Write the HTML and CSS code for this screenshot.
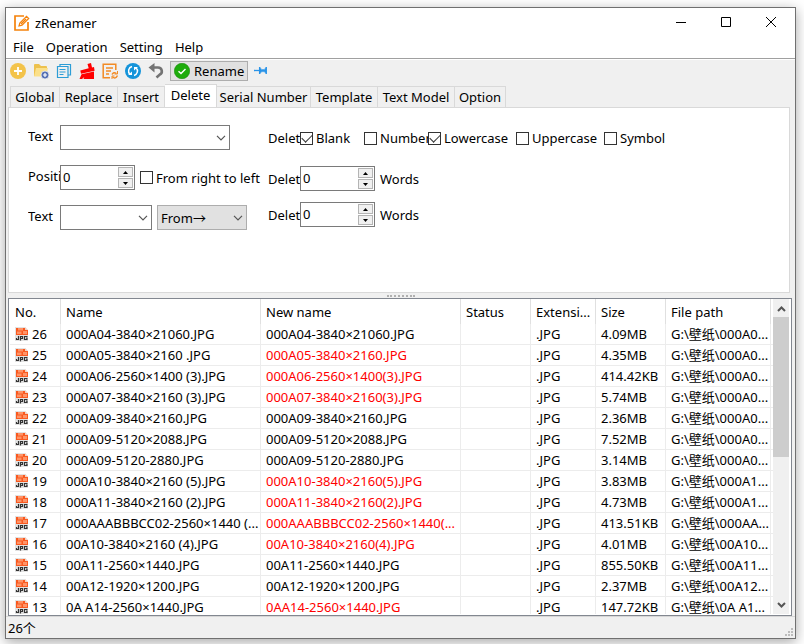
FILE: index.html
```html
<!DOCTYPE html>
<html lang="en">
<head>
<meta charset="utf-8">
<title>zRenamer</title>
<link rel="stylesheet" href="styles.css">
</head>
<body>
<svg class="sprite" aria-hidden="true">
  <symbol id="chevron" viewBox="0 0 10 6"><path d="M1 .8 5 4.8 9 .8" fill="none" stroke="#555" stroke-width="1.2"/></symbol>
  <symbol id="spin-up" viewBox="0 0 5 3"><path d="M0 3 2.5 0 5 3z"/></symbol>
  <symbol id="spin-down" viewBox="0 0 5 3"><path d="M0 0h5L2.5 3z"/></symbol>
  <symbol id="jpg" viewBox="0 0 14 14">
    <path d="M0 0h10l3 3v11H0z" fill="#e2e2e2"/>
    <path d="M1 1h9v2h3v5H1z" fill="#f9591f"/>
    <path d="M3 1h5v2.500H3zM8 4h4v3H8zM2 4.500h4.500V7H2z" fill="#ff9468"/>
    <path d="M10 0 13 3h-3z" fill="#f4d0c0"/>
    <path d="M1.500 11v1.500h2V9M5.500 13.500V9.500h2v2h-2M12.500 9.500h-3v3h2.500v-1.500h-1" fill="none" stroke="#333" stroke-width="1.200"/>
  </symbol>
</svg>
<main class="window">
  <header class="titlebar">
    <svg class="app-icon" viewBox="0 0 16 16" fill="none" stroke="#f5820b" aria-hidden="true">
      <path d="M10 1H1v14h13V7" stroke-width="1.700"/>
      <path d="M5 11 5.800 8 12.500 1.300 14.700 3.500 8 10.200zM7 9l5-5" stroke-width="1.200"/>
    </svg>
    <h1>zRenamer</h1>
    <div class="window-buttons">
      <button aria-label="Minimize"><svg viewBox="0 0 12 12"><path d="M1 5.500h10"/></svg></button>
      <button aria-label="Maximize"><svg viewBox="0 0 12 12"><path d="M1.500 .5h9v9h-9z"/></svg></button>
      <button aria-label="Close"><svg viewBox="0 0 12 12"><path d="M1 0l10 10M11 0 1 10"/></svg></button>
    </div>
  </header>
  <nav class="menubar">
    <button>File</button><button>Operation</button><button>Setting</button><button>Help</button>
  </nav>
  <div class="toolbar">
    <div class="tools">
      <button aria-label="Add files"><svg viewBox="0 0 16 16"><circle cx="8" cy="8" r="8" fill="#f3c34a"/><path d="M8 4v8M4 8h8" stroke="#fff" stroke-width="1.800"/></svg></button>
      <button aria-label="Add folder"><svg viewBox="0 0 16 16"><path d="M1 2q0-1 1-1h4l2 2h5q1 0 1 1v9H1z" fill="#edc14d"/><path d="M3 5h12l-2 8.500H1z" fill="#fbe08a"/><circle cx="12" cy="12" r="4" fill="#5470b5" stroke="#f0f0f0" stroke-width=".8"/><path d="M12 10v4M10 12h4" stroke="#fff" stroke-width="1.200"/></svg></button>
      <button aria-label="Copy"><svg viewBox="0 0 16 16" fill="none" stroke="#2c9dd6"><path d="M4 3V1.500h10.500v10.500H12M1.500 3.500h10.500v11h-10.500z" stroke-width="1.200"/><path d="M3.500 6.500h6M3.500 9h6M3.500 11.500h4"/></svg></button>
      <button aria-label="Clear"><svg viewBox="0 0 16 16" fill="#f00"><path d="M8.500 1 12 0 13 4.500 15 4 15.600 7.800 2 10.800 1.300 7.500 9.700 5.300z"/><path d="M2.500 11.300 15 8.600V16H4.500l.8-2L3 16H.5z"/></svg></button>
      <button aria-label="Edit list"><svg viewBox="0 0 16 16" fill="none" stroke="#f28a24" stroke-width="1.500"><path d="M8 14.800H1.200V1.200h12.600V7"/><path d="M4 5h7M4 8h5M4 11h3"/><path d="M10 11.500q1.500-3 4.500-1M15.500 12.500q-2 4-5 1.500" stroke-width="1.400"/><path d="M15.500 8v3h-3M10 16v-3h2.500" stroke-width="1"/></svg></button>
      <button aria-label="Refresh"><svg viewBox="0 0 16 16"><circle cx="8" cy="8" r="8" fill="#1594da"/><path d="M7 3.600A4.500 4.500 0 0 0 5 11.300M9 12.400A4.500 4.500 0 0 0 11 4.700" fill="none" stroke="#fff" stroke-width="1.500"/><path d="M3 12h4V8.500zM13 4H9v3.500z" fill="#fff"/></svg></button>
      <button aria-label="Undo"><svg viewBox="0 0 16 16"><path d="M4 4.500h6a3.800 3.800 0 0 1 1.500 7.300L8.500 14.500" fill="none" stroke="#737373" stroke-width="2.600"/><path d="M.5 4.500 6.500 0v9.500z" fill="#737373"/></svg></button>
    </div>
    <button class="rename"><svg viewBox="0 0 16 16"><circle cx="8" cy="8" r="7.700" fill="#1eac0c" stroke="#178c08" stroke-width=".6"/><path d="M4.500 8.200 7 10.600 11.500 6" fill="none" stroke="#fff" stroke-width="1.400"/></svg><span>Rename</span></button>
    <button aria-label="Pin"><svg viewBox="0 0 16 16" fill="none" stroke="#2993e8"><path d="M0 7.500h5" stroke-width="1.300"/><path d="M5.700 4v7M12.200 4v7" stroke-width="1.500"/><path d="M6 5.500Q9 8 12 5.500V9.500Q9 7.500 6 9.500z" fill="#2993e8" stroke-width=".6"/></svg></button>
  </div>
  <div class="tabs" role="tablist">
    <button role="tab">Global</button><button role="tab">Replace</button><button role="tab">Insert</button><button role="tab" class="active" aria-selected="true">Delete</button><button role="tab">Serial Number</button><button role="tab">Template</button><button role="tab">Text Model</button><button role="tab">Option</button>
  </div>
  <form class="panel">
    <div class="group">
      <div class="row">
        <label class="caption" for="text">Text</label>
        <span class="select wide"><select id="text"><option></option></select><svg><use href="#chevron"/></svg></span>
      </div>
      <div class="row">
        <label class="caption" for="position">Position</label>
        <span class="spinner"><input id="position" type="text" value="0"><span class="steps"><button type="button" aria-label="Increase"><svg><use href="#spin-up"/></svg></button><button type="button" aria-label="Decrease"><svg><use href="#spin-down"/></svg></button></span></span>
        <label class="check spaced"><input type="checkbox">From right to left</label>
      </div>
      <div class="row">
        <label class="caption" for="anchor">Text</label>
        <span class="select medium"><select id="anchor"><option></option></select><svg><use href="#chevron"/></svg></span>
        <span class="select gray"><select aria-label="Direction"><option>From→</option></select><svg><use href="#chevron"/></svg></span>
      </div>
    </div>
    <div class="group">
      <div class="row">
        <span class="caption">Delete</span>
        <div class="checks">
          <label class="check"><input type="checkbox" checked>Blank</label>
          <label class="check"><input type="checkbox">Number</label>
          <label class="check"><input type="checkbox" checked>Lowercase</label>
          <label class="check"><input type="checkbox">Uppercase</label>
          <label class="check"><input type="checkbox">Symbol</label>
        </div>
      </div>
      <div class="row">
        <label class="caption" for="words-a">Delete</label>
        <span class="spinner"><input id="words-a" type="text" value="0"><span class="steps"><button type="button" aria-label="Increase"><svg><use href="#spin-up"/></svg></button><button type="button" aria-label="Decrease"><svg><use href="#spin-down"/></svg></button></span></span>
        <span class="spaced">Words</span>
      </div>
      <div class="row">
        <label class="caption" for="words-b">Delete</label>
        <span class="spinner"><input id="words-b" type="text" value="0"><span class="steps"><button type="button" aria-label="Increase"><svg><use href="#spin-up"/></svg></button><button type="button" aria-label="Decrease"><svg><use href="#spin-down"/></svg></button></span></span>
        <span class="spaced">Words</span>
      </div>
    </div>
  </form>
  <div class="splitter"><span></span></div>
  <section class="list">
    <div class="viewport">
      <table>
        <colgroup><col class="c-no"><col class="c-name"><col class="c-name"><col class="c-status"><col class="c-ext"><col class="c-size"><col class="c-path"><col></colgroup>
        <thead><tr><th>No.</th><th>Name</th><th>New name</th><th>Status</th><th>Extensi...</th><th>Size</th><th>File path</th><th class="rest"></th></tr></thead>
        <tbody>
          <tr><td><svg><use href="#jpg"/></svg>26</td><td>000A04-3840×21060.JPG</td><td>000A04-3840×21060.JPG</td><td></td><td>.JPG</td><td>4.09MB</td><td>G:\壁纸\000A0...</td><td></td></tr>
          <tr><td><svg><use href="#jpg"/></svg>25</td><td>000A05-3840×2160 .JPG</td><td class="changed">000A05-3840×2160.JPG</td><td></td><td>.JPG</td><td>4.35MB</td><td>G:\壁纸\000A0...</td><td></td></tr>
          <tr><td><svg><use href="#jpg"/></svg>24</td><td>000A06-2560×1400 (3).JPG</td><td class="changed">000A06-2560×1400(3).JPG</td><td></td><td>.JPG</td><td>414.42KB</td><td>G:\壁纸\000A0...</td><td></td></tr>
          <tr><td><svg><use href="#jpg"/></svg>23</td><td>000A07-3840×2160 (3).JPG</td><td class="changed">000A07-3840×2160(3).JPG</td><td></td><td>.JPG</td><td>5.74MB</td><td>G:\壁纸\000A0...</td><td></td></tr>
          <tr><td><svg><use href="#jpg"/></svg>22</td><td>000A09-3840×2160.JPG</td><td>000A09-3840×2160.JPG</td><td></td><td>.JPG</td><td>2.36MB</td><td>G:\壁纸\000A0...</td><td></td></tr>
          <tr><td><svg><use href="#jpg"/></svg>21</td><td>000A09-5120×2088.JPG</td><td>000A09-5120×2088.JPG</td><td></td><td>.JPG</td><td>7.52MB</td><td>G:\壁纸\000A0...</td><td></td></tr>
          <tr><td><svg><use href="#jpg"/></svg>20</td><td>000A09-5120-2880.JPG</td><td>000A09-5120-2880.JPG</td><td></td><td>.JPG</td><td>3.14MB</td><td>G:\壁纸\000A0...</td><td></td></tr>
          <tr><td><svg><use href="#jpg"/></svg>19</td><td>000A10-3840×2160 (5).JPG</td><td class="changed">000A10-3840×2160(5).JPG</td><td></td><td>.JPG</td><td>3.83MB</td><td>G:\壁纸\000A1...</td><td></td></tr>
          <tr><td><svg><use href="#jpg"/></svg>18</td><td>000A11-3840×2160 (2).JPG</td><td class="changed">000A11-3840×2160(2).JPG</td><td></td><td>.JPG</td><td>4.73MB</td><td>G:\壁纸\000A1...</td><td></td></tr>
          <tr><td><svg><use href="#jpg"/></svg>17</td><td>000AAABBBCC02-2560×1440 (...</td><td class="changed">000AAABBBCC02-2560×1440(...</td><td></td><td>.JPG</td><td>413.51KB</td><td>G:\壁纸\000AA...</td><td></td></tr>
          <tr><td><svg><use href="#jpg"/></svg>16</td><td>00A10-3840×2160 (4).JPG</td><td class="changed">00A10-3840×2160(4).JPG</td><td></td><td>.JPG</td><td>4.01MB</td><td>G:\壁纸\00A10...</td><td></td></tr>
          <tr><td><svg><use href="#jpg"/></svg>15</td><td>00A11-2560×1440.JPG</td><td>00A11-2560×1440.JPG</td><td></td><td>.JPG</td><td>855.50KB</td><td>G:\壁纸\00A11...</td><td></td></tr>
          <tr><td><svg><use href="#jpg"/></svg>14</td><td>00A12-1920×1200.JPG</td><td>00A12-1920×1200.JPG</td><td></td><td>.JPG</td><td>2.37MB</td><td>G:\壁纸\00A12...</td><td></td></tr>
          <tr><td><svg><use href="#jpg"/></svg>13</td><td>0A A14-2560×1440.JPG</td><td class="changed">0AA14-2560×1440.JPG</td><td></td><td>.JPG</td><td>147.72KB</td><td>G:\壁纸\0A A1...</td><td></td></tr>
        </tbody>
      </table>
    </div>
    <div class="scrollbar">
      <button aria-label="Scroll up"><svg viewBox="0 0 9 6"><path d="M1 5 4.500 1.500 8 5"/></svg></button>
      <div class="thumb"></div>
      <button aria-label="Scroll down"><svg viewBox="0 0 9 6"><path d="M1 1 4.500 4.500 8 1"/></svg></button>
    </div>
  </section>
  <footer class="statusbar"><span>26个</span>
    <svg class="grip" viewBox="0 0 8 8" fill="#bcbcbc" aria-hidden="true"><path d="M6 0h2v2H6zM3 3h2v2H3zM6 3h2v2H6zM0 6h2v2H0zM3 6h2v2H3zM6 6h2v2H6z"/></svg>
  </footer>
</main>
</body>
</html>
```
FILE: styles.css
```css
* { box-sizing: border-box; }

body {
  margin: 0;
  padding: 7px 8px 5px 5px;
  height: 100vh;
  overflow: hidden;
  background: #fff;
  color: #000;
  font: 13px/18px "Noto Sans", "Noto Sans CJK SC", sans-serif;
}

button, input, select { font: inherit; color: inherit; margin: 0; }
button { padding: 0; border: 0; background: none; white-space: nowrap; }
.sprite { position: absolute; width: 0; height: 0; }

.window {
  display: flex;
  flex-direction: column;
  height: 100%;
  border: 1px solid #707070;
  background: #f0f0f0;
  box-shadow: 0 3px 12px rgba(0, 0, 0, 0.35);
}

/* Title bar and menu */
.titlebar {
  display: flex;
  align-items: center;
  height: 29px;
  padding-left: 8px;
  background: #fff;
}
.app-icon { width: 16px; height: 16px; }
h1 { flex: 1; margin: 0 0 0 5px; font-size: 13px; font-weight: 400; }
.window-buttons { display: flex; padding-right: 2px; }
.window-buttons button { display: grid; place-items: center; width: 45px; height: 28px; }
.window-buttons svg { width: 12px; height: 12px; fill: none; stroke: #000; }

.menubar {
  display: flex;
  gap: 12px;
  height: 22px;
  padding: 0 7px;
  background: #fff;
  border-bottom: 1px solid #a0a0a0;
}
.menubar button { height: 20px; }

/* Toolbar */
.toolbar {
  display: flex;
  align-items: center;
  gap: 6px;
  height: 25px;
  padding: 0 4px 2px;
  border-top: 1px solid #fff;
}
.tools { display: flex; gap: 7px; }
.toolbar button { display: flex; align-items: center; }
.toolbar svg { width: 16px; height: 16px; }
.toolbar .rename {
  gap: 4px;
  height: 20px;
  padding: 0 3px;
  background: #e1e1e1;
  border: 1px solid #adadad;
}

/* Tabs */
.tabs {
  display: grid;
  grid-template-columns: 50px 58px 47px 52px 94px 67px 77px 51px;
  align-items: end;
  height: 23px;
  padding-left: 4px;
}
.tabs button {
  height: 22px;
  padding-bottom: 2px;
  border: 1px solid #d9d9d9;
  border-width: 1px 1px 0 0;
}
.tabs button:first-child { border-left-width: 1px; }
.tabs .active {
  height: 24px;
  padding-bottom: 4px;
  background: #fff;
}

/* Options of the active tab */
.panel {
  display: flex;
  gap: 12px;
  height: 186px;
  margin: 0 5px 0 2px;
  padding: 17px 19px;
  background: #fff;
  border: 1px solid #d9d9d9;
}
.group { display: flex; flex-direction: column; gap: 15px; width: 228px; }
.group + .group { flex: 1; gap: 11px; }
.group + .group .row:first-child { height: 30px; padding-bottom: 4px; }
.row { display: flex; align-items: center; height: 25px; white-space: nowrap; }
.row .caption { flex: none; width: 32px; overflow: hidden; padding-bottom: 4px; }
.group + .group .caption { padding-bottom: 0; }
.row .spaced { margin-left: 5px; }

.select { display: grid; align-items: center; height: 25px; }
.select > * { grid-area: 1 / 1; }
.select select {
  width: 100%;
  height: 25px;
  padding: 0 3px;
  appearance: none;
  border: 1px solid #7a7a7a;
  border-radius: 0;
  background: #fff;
}
.select svg { justify-self: end; width: 10px; height: 6px; margin-right: 4px; pointer-events: none; }
.wide { width: 170px; }
.medium { width: 92px; }
.gray { width: 90px; margin-left: 5px; }
.gray select { background: #e1e1e1; border-color: #adadad; }

.spinner {
  display: flex;
  width: 75px;
  height: 25px;
  border: 1px solid #7a7a7a;
  background: #fff;
}
.spinner input { flex: 1; min-width: 0; padding: 0 2px 2px; border: 0; background: none; }
.steps { display: grid; gap: 1px; width: 17px; padding: 1px; }
.steps button {
  display: grid;
  place-items: center;
  height: 10px;
  background: #f0f0f0;
  border: 1px solid #b4b4b4;
}
.steps svg { width: 5px; height: 3px; }

.checks { display: grid; grid-template-columns: 64px 64px 88px 88px auto; }
.check { display: flex; align-items: center; gap: 3px; }
.check input {
  flex: none;
  display: grid;
  place-items: center;
  width: 13px;
  height: 13px;
  appearance: none;
  border: 1px solid #333;
  background: #fff;
}
.check input:checked::after {
  content: "";
  width: 9px;
  height: 5px;
  margin-bottom: 3px;
  border: solid #333;
  border-width: 0 0 1px 1px;
  transform: rotate(-45deg);
}

.splitter { display: grid; place-items: center; height: 5px; }
.splitter span { width: 28px; border-top: 2px dotted #b0b0b0; }

/* File list */
.list {
  display: flex;
  flex: 1;
  min-height: 0;
  margin: 0 3px 0 2px;
  padding: 0 2px 1px 1px;
  border: 1px solid #828790;
  background: #fff;
}
.viewport { flex: 1; min-width: 0; overflow: hidden; }
table { width: 100%; table-layout: fixed; border-collapse: separate; border-spacing: 0; }
.c-no { width: 51px; }
.c-name { width: 200px; }
.c-status { width: 70px; }
.c-ext { width: 65px; }
.c-size { width: 70px; }
.c-path { width: 105px; }
th, td {
  padding: 0 0 0 5px;
  border-right: 1px solid #ececec;
  text-align: left;
  font-weight: 400;
  white-space: nowrap;
  overflow: hidden;
}
th { height: 25px; border-color: #e0e0e0; }
td { height: 21px; border-bottom: 1px solid #ececec; }
tr > :last-child { padding: 0; border-right: 0; }
td svg { width: 14px; height: 14px; margin-right: 3px; vertical-align: -2px; }
.changed { color: #f00; }

.scrollbar {
  display: flex;
  flex-direction: column;
  width: 16px;
  padding: 1px 0;
  background: #f0f0f0;
}
.scrollbar button { display: grid; place-items: center; height: 17px; }
.scrollbar svg { width: 9px; height: 6px; fill: none; stroke: #555; stroke-width: 2; }
.thumb { height: 140px; margin-bottom: auto; background: #cdcdcd; }

.statusbar {
  display: flex;
  align-items: center;
  justify-content: space-between;
  height: 22px;
  padding: 0 2px;
  border-top: 1px solid #d7d7d7;
}
.grip { align-self: end; width: 8px; height: 8px; margin-bottom: 2px; }
```
